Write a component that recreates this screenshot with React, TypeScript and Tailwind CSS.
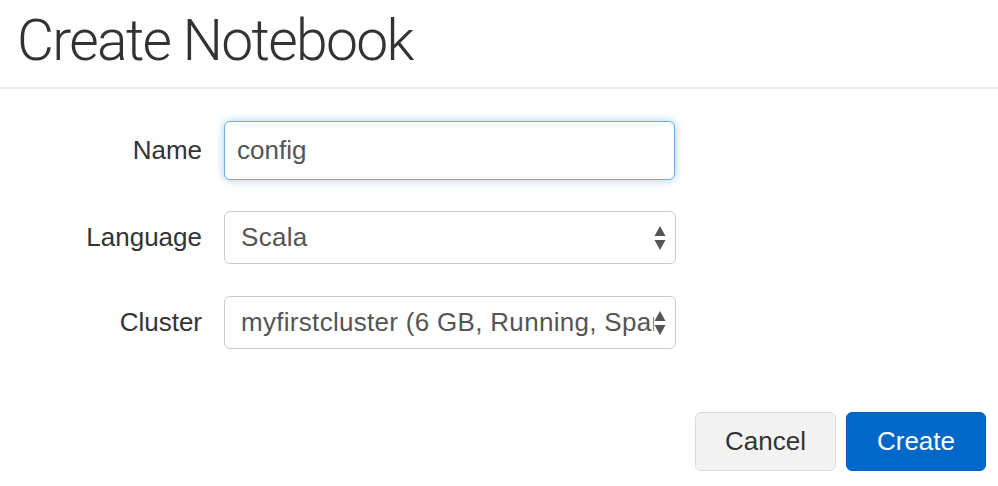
import React from "react"

function UpDown() {
  return (
    <svg width="12" height="26" viewBox="0 0 12 26" className="shrink-0">
      <path d="M6 1 L11.5 11 L0.5 11 Z" fill="#555" />
      <path d="M6 25 L11.5 15 L0.5 15 Z" fill="#555" />
    </svg>
  )
}

function SelectBox({ value }: { value: string }) {
  return (
    <div className="flex h-[53px] w-[452px] items-center rounded-[6px] border border-[#cccccc] bg-white pl-[16px] pr-[9px]">
      <span className="min-w-0 flex-1 overflow-hidden whitespace-nowrap pr-[10px] text-[26px] tracking-[0.3px] text-[#555555]">
        {value}
      </span>
      <UpDown />
    </div>
  )
}

export default function App() {
  const font = { fontFamily: '"Liberation Sans", Arial, sans-serif' }

  return (
    <div className="h-[486px] w-[998px] overflow-hidden bg-white" style={font}>
      {/* Header */}
      <div className="h-[89px] border-b-2 border-[#eeeeee] pl-[17px] pt-[7px]">
        <h1
          className="text-[57px] font-light leading-[68px] tracking-[-1.7px] text-[#333333]"
          style={{ fontFamily: 'Roboto, "Liberation Sans", sans-serif' }}
        >
          Create Notebook
        </h1>
      </div>

      {/* Form */}
      <div className="flex flex-col pt-[32px]">
        <div className="flex items-center">
          <label className="w-[202px] text-right text-[26px] text-[#333333]">Name</label>
          <div className="ml-[22px] flex h-[59px] w-[451px] items-center rounded-[6px] border border-[#66afe9] bg-white px-[12px] shadow-[0_0_8px_rgba(102,175,233,0.6)]">
            <span className="text-[26px] text-[#555555]">config</span>
          </div>
        </div>

        <div className="mt-[31px] flex items-center">
          <label className="w-[202px] text-right text-[26px] text-[#333333]">Language</label>
          <div className="ml-[22px]">
            <SelectBox value="Scala" />
          </div>
        </div>

        <div className="mt-[32px] flex items-center">
          <label className="w-[202px] text-right text-[26px] text-[#333333]">Cluster</label>
          <div className="ml-[22px]">
            <SelectBox value="myfirstcluster (6 GB, Running, Spark 1.6)" />
          </div>
        </div>
      </div>

      {/* Footer buttons */}
      <div className="mt-[63px] flex justify-end gap-[10px] pr-[12px]">
        <button className="h-[59px] w-[141px] rounded-[6px] border border-[#dddddd] bg-[#f3f3f3] text-[26px] text-[#333333]">
          Cancel
        </button>
        <button className="h-[59px] w-[140px] rounded-[6px] border border-[#0062be] bg-[#0068c9] text-[26px] text-white">
          Create
        </button>
      </div>
    </div>
  )
}
